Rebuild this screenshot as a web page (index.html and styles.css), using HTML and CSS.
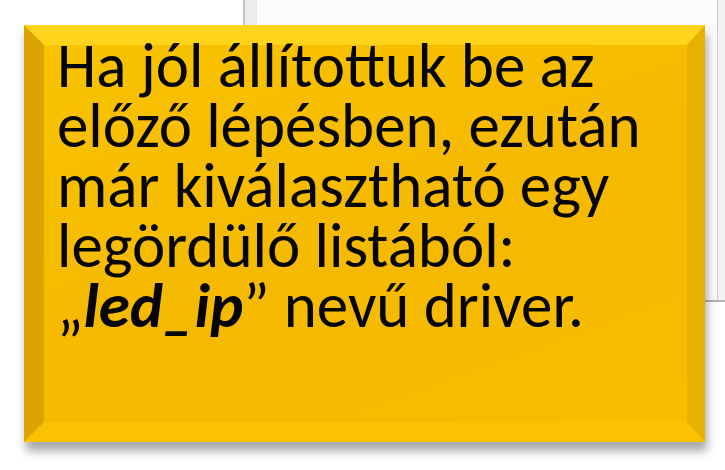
FILE: index.html
```html
<!DOCTYPE html>
<html lang="hu">
<head>
    <meta charset="UTF-8">
    <meta name="viewport" content="width=device-width, initial-scale=1.0">
    <title>led_ip driver</title>
    <link rel="stylesheet" href="styles.css">
</head>
<body>

<div class="backdrop">
    <div class="left-pane"></div>
    <div class="right-pane">
        <div class="sheet"></div>
        <div class="scroll-strip"></div>
    </div>
</div>

<div class="callout">
    <p class="callout-text">Ha jól állítottuk be az<br>előző lépésben, ezután<br>már kiválasztható egy<br>legördülő listából:<br><span class="quote">„<b><i>led_ip</i></b>”</span> nevű driver.</p>
</div>

</body>
</html>
```

FILE: styles.css
```css
body {
    margin: 0;
    background-color: #fff;
    font-family: Carlito, Lato, "Open Sans", sans-serif;
    overflow: hidden;
}
.backdrop {
    display: flex;
    height: 302px;
}
.left-pane {
    width: 243px;
    background-color: #fff;
}
.right-pane {
    flex: 1;
    display: flex;
    border-left: 2px solid #c4c4c4;
    border-bottom: 2px solid #b2b2b2;
    background-color: #ececec;
    padding-left: 12px;
}
.sheet {
    flex: 1;
    background-color: #fbfbfb;
    border-right: 1px solid #cfcfcf;
}
.scroll-strip {
    width: 7px;
    background-color: #f1f1f1;
}
/* the bevelled note lies over the window */
.callout {
    position: absolute;
    left: 24px;
    top: 25px;
    width: 681px;
    height: 417px;
    box-sizing: border-box;
    border-style: solid;
    border-width: 20px 18px 20px 20px;
    border-color: #ffd41a #e9b000 #fac200 #dba400;
    background: linear-gradient(160deg, #f9c300 0%, #f5b900 55%, #f8be00 100%);
    box-shadow: 2px 9px 9px rgba(60, 60, 70, 0.45);
}
.callout-text {
    margin: -9px 0 0 0;
    padding: 0 0 0 13px;
    font-size: 63px;
    line-height: 60px;
    color: #050505;
    white-space: nowrap;
}
.quote b {
    font-weight: 700;
}
```
